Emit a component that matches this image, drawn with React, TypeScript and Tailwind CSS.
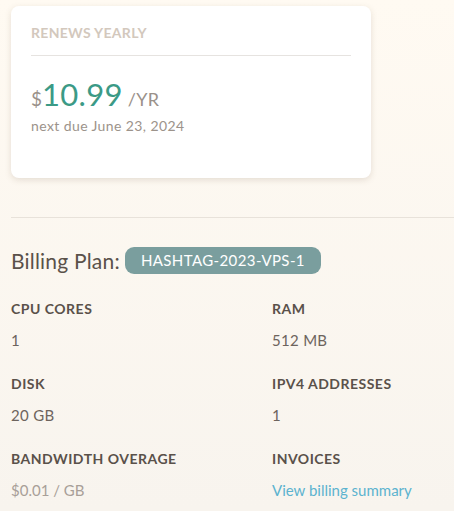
export default function App() {
  const specs = [
    { label: 'CPU Cores', value: '1' },
    { label: 'RAM', value: '512 MB' },
    { label: 'Disk', value: '20 GB' },
    { label: 'IPv4 Addresses', value: '1' },
    { label: 'Bandwidth Overage', value: '$0.01 / GB', muted: true },
    { label: 'Invoices', value: 'View billing summary', link: true },
  ]

  return (
    <div
      className="min-h-[511px] w-full bg-gradient-to-b from-[#fffaf2] to-[#f8f4ee] pl-[11px] pt-[6px]"
      style={{ fontFamily: 'Lato, "Open Sans", sans-serif' }}
    >
      {/* Renewal card */}
      <div className="w-[360px] rounded-lg bg-white px-5 pt-[19px] pb-[44px] shadow-[0_2px_6px_rgba(120,100,80,0.18)]">
        <div className="text-[14px] font-bold uppercase leading-4 tracking-[0.3px] text-[#d3c8bd]">Renews yearly</div>
        <div className="mt-[14px] h-px w-full bg-[#e6e3e0]" />
        <div className="mt-[23px] flex items-baseline leading-none">
          <span className="text-[19px] text-[#9a918a]">$</span>
          <span className="text-[31px] tracking-[0.3px] text-[#3b9a86]">10.99</span>
          <span className="ml-[5px] text-[18px] tracking-[0.2px] text-[#9a918a]">/YR</span>
        </div>
        <div className="mt-[7px] text-[14px] leading-[17px] tracking-[0.4px] text-[#9c938b]">next due June 23, 2024</div>
      </div>

      <div className="mt-[39px] h-px w-full bg-[#e8e2da]" />

      <div className="mt-[29px] flex items-center gap-[5px]">
        <span className="text-[21px] leading-[26px] tracking-[0.2px] text-[#5a514a]">Billing Plan:</span>
        <span className="rounded-[9px] bg-[#7a9e9e] px-[16px] py-[4px] text-[15px] leading-[19px] tracking-[0.4px] text-white">
          HASHTAG-2023-VPS-1
        </span>
      </div>

      <div className="mt-[26px] grid grid-cols-[261px_1fr] gap-y-[26px]">
        {specs.map((s) => (
          <div key={s.label} className="flex flex-col gap-[13px]">
            <div className="text-[14px] font-bold uppercase leading-[18px] tracking-[0.5px] text-[#5a514a]">{s.label}</div>
            <div
              className={
                s.link
                  ? 'text-[15px] leading-[18px] text-[#5cb3cf]'
                  : s.muted
                    ? 'text-[15px] leading-[18px] text-[#a89f98]'
                    : 'text-[15px] leading-[18px] tracking-[0.3px] text-[#6d645d]'
              }
            >
              {s.value}
            </div>
          </div>
        ))}
      </div>
    </div>
  )
}
